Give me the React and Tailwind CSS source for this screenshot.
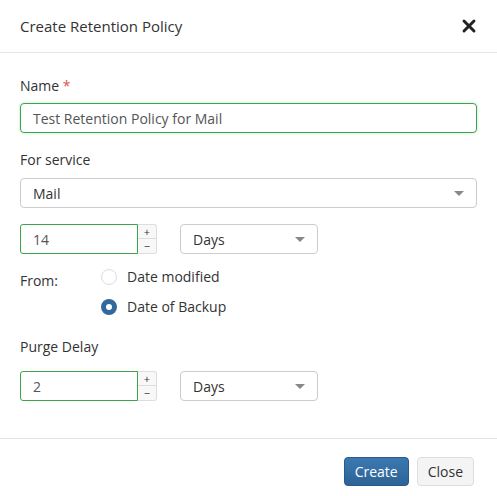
import { X } from 'lucide-react';

function Caret() {
    return <span className="w-0 h-0 border-l-[5px] border-r-[5px] border-t-[5px] border-l-transparent border-r-transparent border-t-[#888]" />;
}

function SelectBox({ value, className }) {
    return (
        <div className={`h-[30px] border border-[#ccc] rounded-[4px] flex items-center justify-between pl-[12px] pr-[12px] text-[#333] ${className}`}>
            <span>{value}</span>
            <Caret />
        </div>
    );
}

function NumberField({ value }) {
    return (
        <div className="flex h-[30px]">
            <div className="w-[118px] border border-[#3aa54a] rounded-l-[3px] flex items-center pl-[12px] text-[#555]">{value}</div>
            <div className="w-[19px] flex flex-col border border-l-0 border-[#ddd] rounded-r-[3px] bg-[#f8f8f8] text-[#333] text-[11px]">
                <span className="h-[14px] leading-[13px] text-center border-b border-[#ddd]">+</span>
                <span className="h-[14px] leading-[13px] text-center">−</span>
            </div>
        </div>
    );
}

export default function App() {
    return (
        <div className="w-[497px] h-[496px] bg-white text-[14px] text-[#333] flex flex-col" style={{ fontFamily: '"Open Sans", sans-serif' }}>
            {/* Header */}
            <div className="h-[53px] border-b border-[#e5e5e5] flex items-center justify-between pl-[20px] pr-[18px]">
                <h2 className="text-[15px] text-[#333]">Create Retention Policy</h2>
                <X className="w-[20px] h-[20px] text-[#222]" strokeWidth={3.5} />
            </div>

            {/* Body */}
            <div className="px-[20px] pt-[23px] h-[386px] border-b border-[#e5e5e5]">
                <label className="block leading-[19px]">Name <span className="text-[#d9534f]">*</span></label>
                <div className="mt-[8px] h-[30px] border border-[#3aa54a] rounded-[4px] flex items-center pl-[12px] text-[#555] shadow-[0_0_3px_rgba(58,165,74,0.35)]">
                    Test Retention Policy for Mail
                </div>

                <label className="block mt-[17px] leading-[19px]">For service</label>
                <SelectBox value="Mail" className="mt-[9px] w-full" />

                <div className="flex items-center mt-[16px] gap-[23px]">
                    <NumberField value="14" />
                    <SelectBox value="Days" className="w-[138px]" />
                </div>

                <div className="flex mt-[12px]">
                    <span className="w-[81px] pt-[4px]">From:</span>
                    <div className="flex flex-col gap-[9px]">
                        <div className="flex items-center gap-[10px]">
                            <span className="w-[16px] h-[16px] rounded-full border border-[#ddd]" />
                            <span>Date modified</span>
                        </div>
                        <div className="flex items-center gap-[10px]">
                            <span className="w-[16px] h-[16px] rounded-full border-[5px] border-[#31699c]" />
                            <span>Date of Backup</span>
                        </div>
                    </div>
                </div>

                <label className="block mt-[20px] leading-[19px]">Purge Delay</label>
                <div className="flex items-center mt-[15px] gap-[23px]">
                    <NumberField value="2" />
                    <SelectBox value="Days" className="w-[138px]" />
                </div>
            </div>

            {/* Footer */}
            <div className="flex justify-end gap-[8px] pr-[23px] pt-[18px]">
                <button className="h-[29px] px-[10px] rounded-[4px] bg-[#31699c] border border-[#2a5a87] text-white bg-gradient-to-b from-[#3b79b1] to-[#2d6396]">Create</button>
                <button className="h-[29px] px-[10px] rounded-[4px] bg-[#f4f4f4] border border-[#ddd] text-[#333]">Close</button>
            </div>
        </div>
    );
}
